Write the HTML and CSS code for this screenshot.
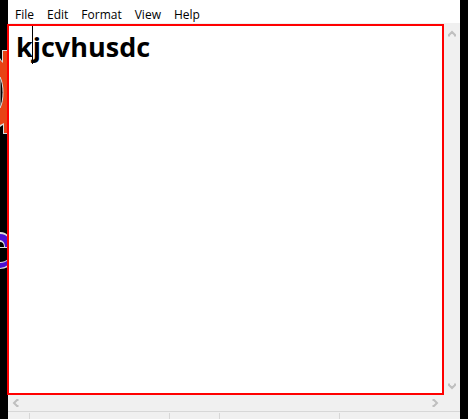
FILE: index.html
```
<!DOCTYPE html>
<html lang="en">
<head>
<meta charset="utf-8">
<title>Notepad</title>
<link rel="stylesheet" href="styles.css">
</head>
<body>
<svg class="wallpaper" width="8" height="419" viewBox="0 0 8 419" aria-hidden="true">
  <path d="M2 50h6v84H3v-9l-3 2V58l2 3z" fill="#ddd"/>
  <path d="M3 51h5v82H4v-10l-4 2V60l3 3z" fill="#e84315"/>
  <path d="M0 77c4 7 4 24 0 31z" fill="#000" stroke="#ddd"/>
  <path d="M0 232q6 0 8 4v12H0v-1h4q0-5-4-5z" fill="#ddd"/>
  <path d="M0 234q6 0 8 4v9H5q0-6-5-7z" fill="#4b10d0"/>
  <path d="M0 248h8v12q-3 3-8 3z" fill="#000"/>
  <path d="M0 262q5 0 8-3v8q-4 2-8 2z" fill="#ddd"/>
  <path d="M0 263q5 0 8-3v5q-4 3-8 3z" fill="#4b10d0"/>
</svg>
<main class="window">
  <nav class="menu" aria-label="Menu">
    <button type="button">File</button>
    <button type="button">Edit</button>
    <button type="button">Format</button>
    <button type="button">View</button>
    <button type="button">Help</button>
  </nav>
  <div class="workspace">
    <div class="editor">
      <textarea class="text" aria-label="Document text" spellcheck="false">kjcvhusdc</textarea>
      <span class="caret"></span>
    </div>
    <div class="scroll vertical">
      <button type="button" aria-label="Scroll up"><svg width="8" height="8" viewBox="0 0 8 8"><path d="M1 6.5V5l3-3 3 3v1.5"/></svg></button>
      <button type="button" aria-label="Scroll down"><svg width="8" height="8" viewBox="0 0 8 8"><path d="M1 1.5V3l3 3 3-3V1.5"/></svg></button>
    </div>
  </div>
  <div class="scroll horizontal">
    <button type="button" aria-label="Scroll left"><svg width="8" height="8" viewBox="0 0 8 8"><path d="M6.5 1H5L2 4l3 3h1.5"/></svg></button>
    <button type="button" aria-label="Scroll right"><svg width="8" height="8" viewBox="0 0 8 8"><path d="M1.5 1H3l3 3-3 3H1.5"/></svg></button>
  </div>
  <footer class="status"><span class="lead"></span><span class="wide"></span><span class="narrow"></span><span class="medium"></span></footer>
</main>
</body>
</html>
```
FILE: styles.css
```
* { box-sizing: border-box; }
body {
  margin: 0;
  height: 100vh;
  display: flex;
  overflow: hidden;
  padding-right: 8px;
  background: #000;
  font-family: "Open Sans", "Noto Sans", sans-serif;
}
.wallpaper { flex: none; }
.window {
  flex: 1;
  min-width: 0;
  display: flex;
  flex-direction: column;
  background: #f0f0f0;
}
button {
  border: 0;
  padding: 0;
  background: none;
  font: inherit;
  color: inherit;
}
.menu {
  height: 23px;
  padding: 7px 7px 0;
  display: flex;
  gap: 13px;
  background: #fff;
  color: #000;
  font-size: 12px;
  line-height: 16px;
}
.workspace {
  flex: 1;
  min-height: 0;
  display: flex;
}
.editor {
  position: relative;
  flex: 1;
  display: flex;
  margin: 1px 0 0 -1px;
  border: 2px solid #f00;
  background: #fff;
}
.text {
  flex: 1;
  min-width: 0;
  margin: 0;
  padding: 2px 7px;
  border: 0;
  outline: 0;
  resize: none;
  overflow: hidden;
  background: none;
  color: #000;
  font: bold 27px/38px "Open Sans", "Noto Sans", sans-serif;
}
.caret {
  position: absolute;
  left: 23px;
  top: 0;
  width: 1px;
  height: 38px;
  background: #000;
}
.scroll {
  display: flex;
  justify-content: space-between;
}
.scroll button {
  display: grid;
  place-items: center;
  width: 16px;
  height: 16px;
}
.scroll path {
  fill: none;
  stroke: #bfbfbf;
  stroke-width: 2;
}
.vertical {
  flex-direction: column;
  width: 16px;
  padding: 3px 0 1px;
}
.horizontal {
  height: 16px;
  margin-right: 17px;
}
.status {
  height: 8px;
  padding-top: 1px;
  display: flex;
  border-top: 1px solid #d7d7d7;
}
.status span { border-right: 1px solid #d7d7d7; }
.lead { width: 22px; }
.wide { width: 140px; }
.narrow { width: 50px; }
.medium { width: 120px; }
```
